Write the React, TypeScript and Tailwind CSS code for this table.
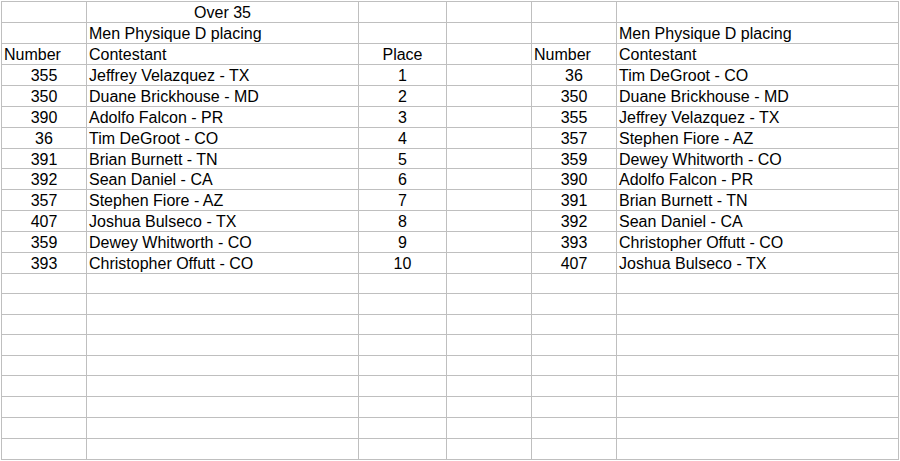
import React from 'react';

type Cell = { text?: string; align?: 'left' | 'center' };

const widths = ['w-[85px]', 'w-[272px]', 'w-[88px]', 'w-[85px]', 'w-[85px]', 'w-[282px]'];

const left = [
    ['355', 'Jeffrey Velazquez - TX'],
    ['350', 'Duane Brickhouse - MD'],
    ['390', 'Adolfo Falcon - PR'],
    ['36', 'Tim DeGroot - CO'],
    ['391', 'Brian Burnett - TN'],
    ['392', 'Sean Daniel - CA'],
    ['357', 'Stephen Fiore - AZ'],
    ['407', 'Joshua Bulseco - TX'],
    ['359', 'Dewey Whitworth - CO'],
    ['393', 'Christopher Offutt - CO'],
];

const right = [
    ['36', 'Tim DeGroot - CO'],
    ['350', 'Duane Brickhouse - MD'],
    ['355', 'Jeffrey Velazquez - TX'],
    ['357', 'Stephen Fiore - AZ'],
    ['359', 'Dewey Whitworth - CO'],
    ['390', 'Adolfo Falcon - PR'],
    ['391', 'Brian Burnett - TN'],
    ['392', 'Sean Daniel - CA'],
    ['393', 'Christopher Offutt - CO'],
    ['407', 'Joshua Bulseco - TX'],
];

// 表格的所有行
const rows: Cell[][] = [
    [{}, { text: 'Over 35', align: 'center' }, {}, {}, {}, {}],
    [{}, { text: 'Men Physique D placing' }, {}, {}, {}, { text: 'Men Physique D placing' }],
    [
        { text: 'Number' },
        { text: 'Contestant' },
        { text: 'Place', align: 'center' },
        {},
        { text: 'Number' },
        { text: 'Contestant' },
    ],
    ...left.map(([num, name], i) => [
        { text: num, align: 'center' as const },
        { text: name },
        { text: String(i + 1), align: 'center' as const },
        {},
        { text: right[i][0], align: 'center' as const },
        { text: right[i][1] },
    ]),
    ...Array.from({ length: 9 }, () => [{}, {}, {}, {}, {}, {}] as Cell[]),
];

// 行高：大部分 21px，个别 20px
const short = new Set([7, 13, 15, 17]);

const App = () => {
    return (
        <div
            className="bg-white w-[900px] h-[461px] overflow-hidden pt-px pl-px text-black"
            style={{ fontFamily: '"Liberation Sans", Arial, sans-serif' }}
        >
            <div className="border-t border-l border-[#bfbfbf] w-[898px]">
                {rows.map((row, r) => (
                    <div key={r} className={`flex ${short.has(r) ? 'h-[20px]' : 'h-[21px]'}`}>
                        {row.map((cell, c) => (
                            <div
                                key={c}
                                className={`${widths[c]} shrink-0 border-r border-b border-[#bfbfbf] flex items-center pl-[2px] pr-[2px] pt-[2px] text-[16px] leading-none whitespace-nowrap ${
                                    cell.align === 'center' ? 'justify-center' : 'justify-start'
                                }`}
                            >
                                {cell.text}
                            </div>
                        ))}
                    </div>
                ))}
            </div>
        </div>
    );
};

export default App;
